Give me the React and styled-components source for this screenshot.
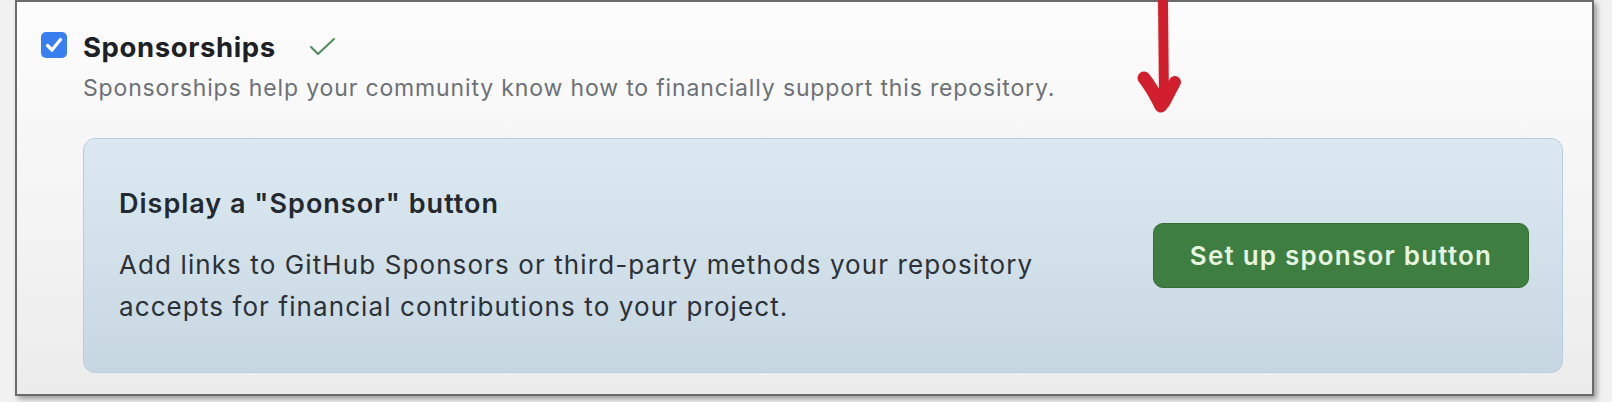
import React from 'react'
import styled, { createGlobalStyle } from 'styled-components'

const GlobalStyle = createGlobalStyle`
  html, body {
    margin: 0;
    padding: 0;
    background: #f1f1f1;
    font-family: Inter, "Noto Sans", sans-serif;
  }
`

const Page = styled.div`
  width: 1612px;
  height: 402px;
  overflow: hidden;
  padding-left: 15px;
  box-sizing: border-box;
`

const Frame = styled.section`
  position: relative;
  width: 1579px;
  height: 396px;
  box-sizing: border-box;
  border: 2px solid #6b6b6b;
  background: linear-gradient(#fdfdfd, #ececec);
  box-shadow: 3px 3px 5px rgba(0, 0, 0, 0.35);
  padding: 30px 29px 0 24px;
`

const Header = styled.label`
  display: flex;
  align-items: center;
  height: 26px;
`

const Checkbox = styled.span`
  width: 26px;
  height: 26px;
  border-radius: 5px;
  background: #3a7ff0;
  display: flex;
  align-items: center;
  justify-content: center;
  margin-right: 16px;
`

const Title = styled.span`
  padding-top: 4px;
  font-size: 27.5px;
  font-weight: 700;
  color: #1d2125;
  letter-spacing: 0.6px;
`

const Saved = styled.svg`
  margin-left: 33px;
  margin-top: 4px;
`

const Description = styled.p`
  margin: 16px 0 0 42px;
  font-size: 23px;
  line-height: 28px;
  letter-spacing: 0.85px;
  color: #6c7177;
`

const Callout = styled.div`
  margin: 36px 0 0 42px;
  height: 235px;
  box-sizing: border-box;
  border: 1px solid #b9cddd;
  border-radius: 12px;
  background: linear-gradient(#dce9f2, #c7d7e1);
  padding: 0 33px 0 35px;
  display: flex;
  align-items: center;
  justify-content: space-between;
`

const CalloutText = styled.div`
  align-self: flex-start;
  padding-top: 49px;
  color: #24292f;
`

const CalloutTitle = styled.h3`
  margin: 0;
  font-size: 27px;
  line-height: 32px;
  font-weight: 600;
  letter-spacing: 1px;
`

const CalloutBody = styled.p`
  margin: 24px 0 0;
  font-size: 26px;
  line-height: 42px;
  letter-spacing: 1.1px;
  color: #2b3137;
`

const Button = styled.button`
  width: 376px;
  height: 65px;
  border: 1px solid #356c38;
  border-radius: 10px;
  background: #3e7e41;
  color: #e6f4e0;
  font-family: inherit;
  font-size: 26px;
  font-weight: 600;
  letter-spacing: 1.2px;
  cursor: pointer;
`

const Arrow = styled.svg`
  position: absolute;
  left: 1113px;
  top: -2px;
`

const App = () => {
  return (
    <Page>
      <GlobalStyle />
      <Frame>
        <Header>
          <Checkbox>
            <svg width="22" height="22" viewBox="0 0 22 22">
              <polyline points="4.5,11.5 9,16 17.5,5.5" fill="none" stroke="#fff" strokeWidth="3.2" strokeLinecap="round" strokeLinejoin="round" />
            </svg>
          </Checkbox>
          <Title>Sponsorships</Title>
          <Saved width="27" height="20" viewBox="0 0 27 20">
            <polyline points="2,10 9,17 25,2" fill="none" stroke="#4f8a5b" strokeWidth="2" strokeLinecap="round" strokeLinejoin="round" />
          </Saved>
        </Header>
        <Description>Sponsorships help your community know how to financially support this repository.</Description>
        <Callout>
          <CalloutText>
            <CalloutTitle>Display a "Sponsor" button</CalloutTitle>
            <CalloutBody>
              Add links to GitHub Sponsors or third-party methods your repository<br />
              accepts for financial contributions to your project.
            </CalloutBody>
          </CalloutText>
          <Button>Set up sponsor button</Button>
        </Callout>
        <Arrow width="60" height="118" viewBox="0 0 60 118">
          <g fill="none" stroke="#d21f2d" strokeLinecap="round" strokeLinejoin="round">
            <path d="M33 0 L34 100" strokeWidth="10" />
            <path d="M14 78 Q22 88 31 106" strokeWidth="13" />
            <path d="M45 82 L34 103" strokeWidth="12" />
          </g>
        </Arrow>
      </Frame>
    </Page>
  )
}

export default App
